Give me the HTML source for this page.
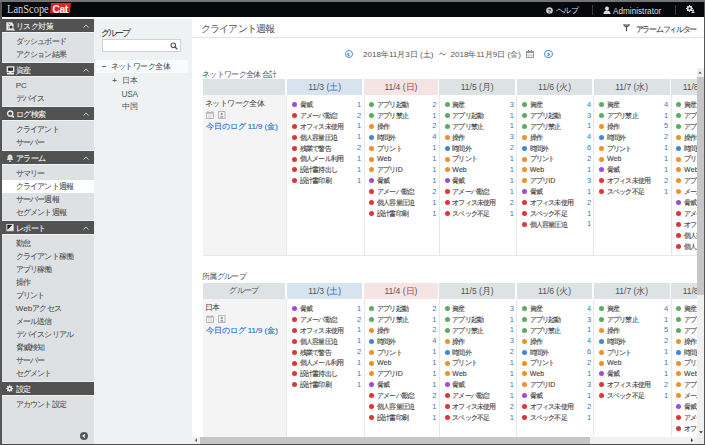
<!DOCTYPE html>
<html><head><meta charset="utf-8"><style>
*{margin:0;padding:0;box-sizing:border-box}
html,body{width:705px;height:445px;overflow:hidden}
body{background:#555;font-family:"Liberation Sans",sans-serif;position:relative;color:#555}
div,span{position:absolute;white-space:nowrap}
.topbar{left:2px;top:2px;width:701.8px;height:14.5px;background:#07080c}
.white{left:2px;top:16.5px;width:701.8px;height:427px;background:#fff}
.bottom{left:0;top:443.5px;width:705px;height:1.5px;background:#4c4c4c}
.side{left:2px;top:19px;width:92px;height:424.5px;background:#dde1e4}
.grp{left:94px;top:19px;width:98px;height:424.5px;background:#eef2f3}
.sh{left:2px;width:92px;height:13.9px;background:#525252;border-bottom:1px solid #f3f3f3;box-shadow:0 -1px 0 #f0f0f0}
.sh .si{left:4px;top:3px;width:9px;height:9px}
.sh .si svg{display:block}
.sh .st{left:14px;top:0.7px;line-height:13.9px;font-size:8px;color:#eee;letter-spacing:-0.6px;-webkit-text-stroke:0.1px #eee}
.chev{position:absolute;left:81.3px;top:4.5px}
.sit{left:2px;width:92px;height:13px;line-height:13px;padding-left:13.7px;font-size:8px;color:#4a4a4a;-webkit-text-stroke:0.05px #4a4a4a;letter-spacing:-0.8px}
.sit.sel{background:#fff}
.lat{position:static;letter-spacing:0.1px}
.logo{left:7.2px;top:1.5px;font-family:"Liberation Serif",serif;font-size:12px;color:#d6d6d6;line-height:14px;transform:scaleX(0.87);transform-origin:0 0}
.cat{left:50px;top:3.1px;width:21px;height:10.3px;background:#dc2626;clip-path:polygon(4.5% 0,100% 0,94% 100%,0 100%);color:#fff;font-weight:bold;font-size:10.2px;line-height:13px;padding-left:2.5px;letter-spacing:-0.4px}
.tb{top:3.5px;line-height:15px;font-size:8.2px;color:#ddd}
.sep{top:5px;width:1px;height:10px;background:#3a3a3a}
.title{left:201.2px;top:22.5px;font-size:9.5px;line-height:11px;color:#555;letter-spacing:-0.9px}
.hline{left:192px;top:36.5px;width:511.8px;height:1px;background:#e3e3e3}
.filt{left:635.8px;top:23.5px;font-size:8.4px;line-height:10px;color:#444;letter-spacing:-1.3px;-webkit-text-stroke:0.1px #444}
.date{top:49px;font-size:8.05px;line-height:11px;color:#555}
.circ{width:8.5px;height:8.5px;border:1.2px solid #4a8ee0;border-radius:50%}
.lbl{left:202px;font-size:8px;line-height:10px;color:#555;letter-spacing:-0.7px}
.th0{left:203px;width:82px;height:16px;background:#dde2e5;text-align:center;line-height:16px;font-size:8px;color:#555;letter-spacing:-0.6px}
.th{height:16px;text-align:center;line-height:16px;font-size:8.5px;color:#555;background:#dde2e5}
.th.sat{background:#d7e4f0}
.th.sun{background:#f6e3e3}
.blue{position:static;color:#3a78c8}
.red{position:static;color:#d03040}
.rh{left:203px;width:83.5px;background:#f4f4f4;border-bottom:1px solid #e6e6e6}
.rn{left:2px;top:3.5px;font-size:8px;line-height:10px;color:#444;letter-spacing:-0.6px}
.ic{position:absolute;left:3px;top:16px}
.ic i{position:absolute;top:0;width:7px;height:7px;border:1px solid #aaa}
.ic i.i1{left:0} .ic i.i2{left:12px}
.lnk{left:2.5px;top:27px;font-size:7.85px;line-height:10px;color:#2f74cc;-webkit-text-stroke:0.15px #2f74cc}
.td{background:#fff;border-left:1px solid #e8e8e8;padding-top:3.7px}
.it{position:relative;height:10.9px;line-height:10.9px;font-size:7px}
.it b{position:absolute;left:4.9px;top:3.4px;width:5px;height:5px;border-radius:50%}
.it .nm{left:12.5px;top:1.3px;color:#444;-webkit-text-stroke:0.12px #444;letter-spacing:-0.8px}
.it .nu{right:2.3px;top:1px;color:#3a78c8;font-size:7.5px}
.vs{left:697px;top:68px;width:6.8px;height:369px;background:#f0f0f0}
.vthumb{left:697px;top:77px;width:6.8px;height:218px;background:#c6c6c6}
.hs{left:192px;top:437px;width:505px;height:6.5px;background:#f0f0f0}
.hthumb{left:200px;top:437px;width:390px;height:6.5px;background:#c6c6c6}
.corner{left:697px;top:437px;width:6.8px;height:6.5px;background:#ececec}
</style></head><body>
<div style="left:0;top:0;width:705px;height:2px;background:#747474"></div>
<div class="topbar"></div>
<div class="white"></div>
<div class="side"></div>
<div class="grp"></div>
<div class="bottom"></div>
<div class="logo">LanScope</div>
<div class="cat">Cat</div>
<div class="tb" style="left:545.5px"><svg width="7" height="7" viewBox="0 0 7 7" style="margin-top:3px;display:block"><circle cx="3.5" cy="3.5" r="3.3" fill="#ccc"/><text x="3.5" y="5.6" font-size="5.5" font-family="Liberation Sans" font-weight="bold" text-anchor="middle" fill="#222">?</text></svg></div>
<div class="tb" style="left:556px;top:2.5px;letter-spacing:-0.6px">ヘルプ</div>
<div class="sep" style="left:592px"></div>
<div class="tb" style="left:603px"><svg width="8" height="8" viewBox="0 0 8 8" style="margin-top:2px;display:block"><circle cx="4" cy="2.5" r="2" fill="#ddd"/><path d="M0.5 8c0-2.5 1.5-3.5 3.5-3.5s3.5 1 3.5 3.5z" fill="#ddd"/></svg></div>
<div class="tb" style="left:613px">Administrator</div>
<div class="sep" style="left:675px"></div>
<div class="tb" style="left:686px"><svg width="9" height="8" viewBox="0 0 9 8" style="margin-top:1.5px;display:block"><circle cx="3.5" cy="3.5" r="2.2" fill="none" stroke="#ddd" stroke-width="1.2"/><path d="M3.5 0v7M0 3.5h7M1 1l5 5M6 1l-5 5" stroke="#ddd" stroke-width="0.9"/><circle cx="3.5" cy="3.5" r="1" fill="#07080c"/><circle cx="7" cy="5.5" r="1.1" fill="#ddd"/><path d="M5.3 8c0-1 .7-1.6 1.7-1.6s1.7.6 1.7 1.6z" fill="#ddd"/></svg></div>
<div class="sh" style="top:19px"><span class="si"><svg width="9" height="9" viewBox="0 0 9 9"><path d="M0.3 0.3h5.5l1.7 1.7v2H0.3z M0.3 4h2v4.5H0.3z M0.3 6.8h7.5v1.7H0.3z" fill="#e8e8e8"/><circle cx="5" cy="5" r="2.6" fill="#e8e8e8"/><circle cx="5" cy="5" r="1.5" fill="#333"/><path d="M2.5 1.6L3.8 2.8" stroke="#444" stroke-width="0.9"/><path d="M6.8 6.8L8.5 8.5" stroke="#e8e8e8" stroke-width="1.2"/></svg></span><span class="st">リスク対策</span><svg class="chev" width="6" height="4" viewBox="0 0 6 4"><path d="M0.5 3.5L3 1L5.5 3.5" stroke="#ccc" stroke-width="1" fill="none"/></svg></div>
<div class="sit" style="top:35px">ダッシュボード</div>
<div class="sit" style="top:48px">アクション結果</div>
<div class="sh" style="top:63px"><span class="si"><svg width="9" height="9" viewBox="0 0 9 9"><rect x="1.3" y="0.9" width="6.4" height="4.6" stroke="#eee" stroke-width="1.3" fill="#333"/><path d="M3.5 5.5h2v1.2h-2z M1 6.7h7v1.7H1z" fill="#eee"/></svg></span><span class="st">資産</span><svg class="chev" width="6" height="4" viewBox="0 0 6 4"><path d="M0.5 3.5L3 1L5.5 3.5" stroke="#ccc" stroke-width="1" fill="none"/></svg></div>
<div class="sit" style="top:79px"><span class="lat">PC</span></div>
<div class="sit" style="top:92px">デバイス</div>
<div class="sh" style="top:107px"><span class="si"><svg width="9" height="9" viewBox="0 0 9 9"><circle cx="4.2" cy="3.6" r="2.6" stroke="#eee" stroke-width="1.3" fill="none"/><path d="M6 5.6l1.8 1.8" stroke="#eee" stroke-width="1.6"/></svg></span><span class="st">ログ検索</span><svg class="chev" width="6" height="4" viewBox="0 0 6 4"><path d="M0.5 3.5L3 1L5.5 3.5" stroke="#ccc" stroke-width="1" fill="none"/></svg></div>
<div class="sit" style="top:123px">クライアント</div>
<div class="sit" style="top:136px">サーバー</div>
<div class="sh" style="top:151px"><span class="si"><svg width="8" height="8" viewBox="0 0 8 8"><path d="M4 0.5c-1.8 0-2.5 1.5-2.5 3v1.5l-1 1h7l-1-1v-1.5c0-1.5-.7-3-2.5-3z" fill="#ddd"/><circle cx="4" cy="7.2" r="0.9" fill="#ddd"/></svg></span><span class="st">アラーム</span><svg class="chev" width="6" height="4" viewBox="0 0 6 4"><path d="M0.5 3.5L3 1L5.5 3.5" stroke="#ccc" stroke-width="1" fill="none"/></svg></div>
<div class="sit" style="top:167px">サマリー</div>
<div class="sit sel" style="top:180px">クライアント週報</div>
<div class="sit" style="top:193px">サーバー週報</div>
<div class="sit" style="top:206px">セグメント週報</div>
<div class="sh" style="top:221px"><span class="si"><svg width="9" height="9" viewBox="0 0.6 9 9"><rect x="0.4" y="0.4" width="7.2" height="7.4" fill="#eee"/><path d="M1.3 1.3h5.2L1.3 6.5z" fill="#222"/><path d="M1.5 6.8h5" stroke="#bbb" stroke-width="0.6"/></svg></span><span class="st">レポート</span><svg class="chev" width="6" height="4" viewBox="0 0 6 4"><path d="M0.5 3.5L3 1L5.5 3.5" stroke="#ccc" stroke-width="1" fill="none"/></svg></div>
<div class="sit" style="top:237px">勤怠</div>
<div class="sit" style="top:250px">クライアント稼働</div>
<div class="sit" style="top:263px">アプリ稼働</div>
<div class="sit" style="top:276px">操作</div>
<div class="sit" style="top:289px">プリント</div>
<div class="sit" style="top:302px"><span class="lat">Web</span>アクセス</div>
<div class="sit" style="top:315px">メール送信</div>
<div class="sit" style="top:328px">デバイスシリアル</div>
<div class="sit" style="top:341px">脅威検知</div>
<div class="sit" style="top:354px">サーバー</div>
<div class="sit" style="top:367px">セグメント</div>
<div class="sh" style="top:382px"><span class="si"><svg width="9" height="9" viewBox="0.8 0.9 9 9" style="overflow:visible"><polygon points="4.50,0.50 5.38,2.38 7.33,1.67 6.62,3.62 8.50,4.50 6.62,5.38 7.33,7.33 5.38,6.62 4.50,8.50 3.62,6.62 1.67,7.33 2.38,5.38 0.50,4.50 2.38,3.62 1.67,1.67 3.62,2.38" fill="#f0f0f0"/><circle cx="4.5" cy="4.5" r="0.9" fill="#333"/></svg></span><span class="st">設定</span></div>
<div class="sit" style="top:398px">アカウント設定</div>
<div style="left:79.5px;top:432px;width:8px;height:8px;border-radius:50%;background:#555"></div>
<svg style="position:absolute;left:81.5px;top:434px" width="4" height="4" viewBox="0 0 4 4"><path d="M3 0.5L1 2L3 3.5" stroke="#fff" stroke-width="1.1" fill="none"/></svg>
<div style="left:100.8px;top:28px;font-size:8.8px;line-height:10px;color:#444;letter-spacing:-1.85px;-webkit-text-stroke:0.1px #444">グループ</div>
<div style="left:102px;top:39px;width:78.7px;height:13px;background:#fff;border:1px solid #cfd3d5"></div>
<svg style="position:absolute;left:170px;top:42px" width="8" height="8" viewBox="0 0 8 8"><circle cx="3.3" cy="3.3" r="2.3" stroke="#555" stroke-width="1.2" fill="none"/><path d="M5 5l2.3 2.3" stroke="#555" stroke-width="1.4"/></svg>
<div style="left:96px;top:60px;width:92px;height:13px;background:#f8fbfc"></div>
<div style="left:101.5px;top:65.5px;width:4.5px;height:1.2px;background:#666"></div>
<div style="left:110.5px;top:61px;font-size:8.3px;line-height:10px;color:#444;letter-spacing:-0.55px">ネットワーク全体</div>
<div style="left:112.3px;top:76px;font-size:8px;line-height:10px;color:#666;font-weight:bold">+</div>
<div style="left:121.5px;top:75px;font-size:8.3px;line-height:10px;color:#555">日本</div>
<div style="left:121.5px;top:88.5px;font-size:8.3px;line-height:10px;color:#555;letter-spacing:-0.25px">USA</div>
<div style="left:121.5px;top:101px;font-size:8.3px;line-height:10px;color:#555">中国</div>
<div class="title">クライアント週報</div>
<div class="hline"></div>
<svg style="position:absolute;left:623px;top:24px" width="7" height="8" viewBox="0 0 7 8"><path d="M0.3 0.2h6.4v1.3L4.1 3.6V7.5L2.9 7.1V3.6L0.3 1.5z" fill="#555"/><path d="M1.8 1.0h3.4" stroke="#fff" stroke-width="0.6"/></svg>
<div class="filt">アラームフィルター</div>
<div class="circ" style="left:344.5px;top:49.5px"></div>
<svg style="position:absolute;left:346.3px;top:51.5px" width="5" height="5" viewBox="0 0 5 5"><path d="M3.3 0.9L1.7 2.5L3.3 4.1" stroke="#4a8ee0" stroke-width="1.3" fill="none"/></svg>
<div class="date" style="left:363px">2018年11月3日 (土)</div>
<svg style="position:absolute;left:438.5px;top:52px" width="7" height="4" viewBox="0 0 7 4"><path d="M0.3 2.6C1.5 0.6 2.5 0.8 3.5 2 S5.5 3.4 6.7 1.4" stroke="#555" stroke-width="0.9" fill="none"/></svg>
<div class="date" style="left:450.5px">2018年11月9日 (金)</div>
<svg style="position:absolute;left:526px;top:50px" width="8" height="8" viewBox="0 0 8 8"><rect x="0.5" y="1.5" width="7" height="6" fill="none" stroke="#999"/><path d="M0.5 2.5h7" stroke="#999"/><path d="M2.7 3.5v3.5M5.3 3.5v3.5M1 5.2h6" stroke="#c4c4c4" stroke-width="0.8"/><path d="M2.5 0v2M5.5 0v2" stroke="#888"/></svg>
<div class="circ" style="left:544px;top:49.5px"></div>
<svg style="position:absolute;left:545.8px;top:51.5px" width="5" height="5" viewBox="0 0 5 5"><path d="M1.7 0.9L3.3 2.5L1.7 4.1" stroke="#4a8ee0" stroke-width="1.3" fill="none"/></svg>
<div style="left:192px;top:68px;width:505px;height:369px;overflow:hidden"><div style="left:-192px;top:-68px;width:705px;height:445px">
<div class="lbl" style="top:69.5px">ネットワーク全体 合計</div>
<div class="th0" style="top:79px"></div>
<div class="rh" style="top:95px;height:161px"><div class="rn">ネットワーク全体</div><svg class="ic" width="20" height="8" viewBox="0 0 20 8"><path d="M0.5 1.5h7v6h-7z" stroke="#b8b8b8" stroke-width="1" fill="none"/><path d="M0.5 2.5h7" stroke="#c8c8c8"/><path d="M3 3.5v3.5M5 3.5v3.5" stroke="#d0d0d0" stroke-width="0.9"/><path d="M2 0v2M6 0v2" stroke="#b0b0b0"/><rect x="12.5" y="0.5" width="6.5" height="7" stroke="#b8b8b8" fill="none"/><circle cx="15.75" cy="2.9" r="1.1" fill="#9a9a9a"/><path d="M14.2 6.8c0-1.4 .7-2.2 1.55-2.2s1.55 .8 1.55 2.2z" fill="#a8a8a8"/></svg><div class="lnk">今日のログ 11/9 (金)</div></div>
<div class="th sat" style="left:286.8px;top:79px;width:75.7px">11/3 (<span class="blue">土</span>)</div>
<div class="td" style="left:286.3px;top:95px;width:77.2px;height:161px"><div class="it"><b style="background:#9a4ce0"></b><span class="nm">脅威</span><span class="nu">1</span></div><div class="it"><b style="background:#e03535"></b><span class="nm">アメーバ勤怠</span><span class="nu">2</span></div><div class="it"><b style="background:#e03535"></b><span class="nm">オフィス未使用</span><span class="nu">1</span></div><div class="it"><b style="background:#e03535"></b><span class="nm">個人容量圧迫</span><span class="nu">1</span></div><div class="it"><b style="background:#e03535"></b><span class="nm">残業で警告</span><span class="nu">2</span></div><div class="it"><b style="background:#e03535"></b><span class="nm">個人メール利用</span><span class="nu">1</span></div><div class="it"><b style="background:#e03535"></b><span class="nm">設計書持出し</span><span class="nu">1</span></div><div class="it"><b style="background:#e03535"></b><span class="nm">設計書印刷</span><span class="nu">1</span></div></div>
<div class="th sun" style="left:364.0px;top:79px;width:73.8px">11/4 (<span class="red">日</span>)</div>
<div class="td" style="left:363.5px;top:95px;width:75.3px;height:161px"><div class="it"><b style="background:#5cab62"></b><span class="nm">アプリ起動</span><span class="nu">2</span></div><div class="it"><b style="background:#5cab62"></b><span class="nm">アプリ禁止</span><span class="nu">1</span></div><div class="it"><b style="background:#f0902a"></b><span class="nm">操作</span><span class="nu">2</span></div><div class="it"><b style="background:#3f86e0"></b><span class="nm">時間外</span><span class="nu">4</span></div><div class="it"><b style="background:#f0902a"></b><span class="nm">プリント</span><span class="nu">1</span></div><div class="it"><b style="background:#f0902a"></b><span class="nm"><span class="lat">Web</span></span><span class="nu">1</span></div><div class="it"><b style="background:#f0902a"></b><span class="nm">アプリ<span class="lat">ID</span></span><span class="nu">1</span></div><div class="it"><b style="background:#9a4ce0"></b><span class="nm">脅威</span><span class="nu">1</span></div><div class="it"><b style="background:#e03535"></b><span class="nm">アメーバ勤怠</span><span class="nu">2</span></div><div class="it"><b style="background:#e03535"></b><span class="nm">個人容量圧迫</span><span class="nu">1</span></div><div class="it"><b style="background:#e03535"></b><span class="nm">設計書印刷</span><span class="nu">1</span></div></div>
<div class="th wk" style="left:439.3px;top:79px;width:75.9px">11/5 (月)</div>
<div class="td" style="left:438.8px;top:95px;width:77.4px;height:161px"><div class="it"><b style="background:#5cab62"></b><span class="nm">資産</span><span class="nu">3</span></div><div class="it"><b style="background:#5cab62"></b><span class="nm">アプリ起動</span><span class="nu">1</span></div><div class="it"><b style="background:#5cab62"></b><span class="nm">アプリ禁止</span><span class="nu">1</span></div><div class="it"><b style="background:#f0902a"></b><span class="nm">操作</span><span class="nu">3</span></div><div class="it"><b style="background:#3f86e0"></b><span class="nm">時間外</span><span class="nu">2</span></div><div class="it"><b style="background:#f0902a"></b><span class="nm">プリント</span><span class="nu">1</span></div><div class="it"><b style="background:#f0902a"></b><span class="nm"><span class="lat">Web</span></span><span class="nu">1</span></div><div class="it"><b style="background:#9a4ce0"></b><span class="nm">脅威</span><span class="nu">1</span></div><div class="it"><b style="background:#e03535"></b><span class="nm">アメーバ勤怠</span><span class="nu">1</span></div><div class="it"><b style="background:#e03535"></b><span class="nm">オフィス未使用</span><span class="nu">2</span></div><div class="it"><b style="background:#e03535"></b><span class="nm">スペック不足</span><span class="nu">1</span></div></div>
<div class="th wk" style="left:516.7px;top:79px;width:75.7px">11/6 (火)</div>
<div class="td" style="left:516.2px;top:95px;width:77.2px;height:161px"><div class="it"><b style="background:#5cab62"></b><span class="nm">資産</span><span class="nu">4</span></div><div class="it"><b style="background:#5cab62"></b><span class="nm">アプリ起動</span><span class="nu">3</span></div><div class="it"><b style="background:#5cab62"></b><span class="nm">アプリ禁止</span><span class="nu">1</span></div><div class="it"><b style="background:#f0902a"></b><span class="nm">操作</span><span class="nu">4</span></div><div class="it"><b style="background:#3f86e0"></b><span class="nm">時間外</span><span class="nu">6</span></div><div class="it"><b style="background:#f0902a"></b><span class="nm">プリント</span><span class="nu">2</span></div><div class="it"><b style="background:#f0902a"></b><span class="nm"><span class="lat">Web</span></span><span class="nu">1</span></div><div class="it"><b style="background:#f0902a"></b><span class="nm">アプリ<span class="lat">ID</span></span><span class="nu">3</span></div><div class="it"><b style="background:#9a4ce0"></b><span class="nm">脅威</span><span class="nu">1</span></div><div class="it"><b style="background:#e03535"></b><span class="nm">オフィス未使用</span><span class="nu">2</span></div><div class="it"><b style="background:#e03535"></b><span class="nm">スペック不足</span><span class="nu">1</span></div><div class="it"><b style="background:#e03535"></b><span class="nm">個人容量圧迫</span><span class="nu">1</span></div></div>
<div class="th wk" style="left:593.9px;top:79px;width:75.7px">11/7 (水)</div>
<div class="td" style="left:593.4px;top:95px;width:77.2px;height:161px"><div class="it"><b style="background:#5cab62"></b><span class="nm">資産</span><span class="nu">4</span></div><div class="it"><b style="background:#5cab62"></b><span class="nm">アプリ禁止</span><span class="nu">1</span></div><div class="it"><b style="background:#f0902a"></b><span class="nm">操作</span><span class="nu">5</span></div><div class="it"><b style="background:#3f86e0"></b><span class="nm">時間外</span><span class="nu">2</span></div><div class="it"><b style="background:#f0902a"></b><span class="nm">プリント</span><span class="nu">1</span></div><div class="it"><b style="background:#f0902a"></b><span class="nm"><span class="lat">Web</span></span><span class="nu">1</span></div><div class="it"><b style="background:#9a4ce0"></b><span class="nm">脅威</span><span class="nu">1</span></div><div class="it"><b style="background:#e03535"></b><span class="nm">オフィス未使用</span><span class="nu">2</span></div><div class="it"><b style="background:#e03535"></b><span class="nm">スペック不足</span><span class="nu">1</span></div></div>
<div class="th wk" style="left:671.1px;top:79px;width:56.0px">11/8 (木)</div>
<div class="td" style="left:670.6px;top:95px;width:77.2px;height:161px"><div class="it"><b style="background:#5cab62"></b><span class="nm">資産</span><span class="nu">4</span></div><div class="it"><b style="background:#5cab62"></b><span class="nm">アプリ起動</span><span class="nu">3</span></div><div class="it"><b style="background:#5cab62"></b><span class="nm">アプリ禁止</span><span class="nu">1</span></div><div class="it"><b style="background:#f0902a"></b><span class="nm">操作</span><span class="nu">4</span></div><div class="it"><b style="background:#3f86e0"></b><span class="nm">時間外</span><span class="nu">6</span></div><div class="it"><b style="background:#f0902a"></b><span class="nm">プリント</span><span class="nu">2</span></div><div class="it"><b style="background:#f0902a"></b><span class="nm"><span class="lat">Web</span></span><span class="nu">1</span></div><div class="it"><b style="background:#f0902a"></b><span class="nm">アプリ<span class="lat">ID</span></span><span class="nu">3</span></div><div class="it"><b style="background:#f0902a"></b><span class="nm">メール送信</span><span class="nu">1</span></div><div class="it"><b style="background:#9a4ce0"></b><span class="nm">脅威</span><span class="nu">1</span></div><div class="it"><b style="background:#e03535"></b><span class="nm">アメーバ勤怠</span><span class="nu">1</span></div><div class="it"><b style="background:#e03535"></b><span class="nm">オフィス未使用</span><span class="nu">2</span></div><div class="it"><b style="background:#e03535"></b><span class="nm">個人容量圧迫</span><span class="nu">1</span></div><div class="it"><b style="background:#e03535"></b><span class="nm">個人メール利用</span><span class="nu">1</span></div></div>
<div style="left:203px;top:255px;width:560px;height:1px;background:#e8e8e8"></div>
<div class="lbl" style="top:271.5px">所属グループ</div>
<div class="th0" style="top:283px">グループ</div>
<div class="rh" style="top:299px;height:161px"><div class="rn">日本</div><svg class="ic" width="20" height="8" viewBox="0 0 20 8"><path d="M0.5 1.5h7v6h-7z" stroke="#b8b8b8" stroke-width="1" fill="none"/><path d="M0.5 2.5h7" stroke="#c8c8c8"/><path d="M3 3.5v3.5M5 3.5v3.5" stroke="#d0d0d0" stroke-width="0.9"/><path d="M2 0v2M6 0v2" stroke="#b0b0b0"/><rect x="12.5" y="0.5" width="6.5" height="7" stroke="#b8b8b8" fill="none"/><circle cx="15.75" cy="2.9" r="1.1" fill="#9a9a9a"/><path d="M14.2 6.8c0-1.4 .7-2.2 1.55-2.2s1.55 .8 1.55 2.2z" fill="#a8a8a8"/></svg><div class="lnk">今日のログ 11/9 (金)</div></div>
<div class="th sat" style="left:286.8px;top:283px;width:75.7px">11/3 (<span class="blue">土</span>)</div>
<div class="td" style="left:286.3px;top:299px;width:77.2px;height:161px"><div class="it"><b style="background:#9a4ce0"></b><span class="nm">脅威</span><span class="nu">1</span></div><div class="it"><b style="background:#e03535"></b><span class="nm">アメーバ勤怠</span><span class="nu">2</span></div><div class="it"><b style="background:#e03535"></b><span class="nm">オフィス未使用</span><span class="nu">1</span></div><div class="it"><b style="background:#e03535"></b><span class="nm">個人容量圧迫</span><span class="nu">1</span></div><div class="it"><b style="background:#e03535"></b><span class="nm">残業で警告</span><span class="nu">2</span></div><div class="it"><b style="background:#e03535"></b><span class="nm">個人メール利用</span><span class="nu">1</span></div><div class="it"><b style="background:#e03535"></b><span class="nm">設計書持出し</span><span class="nu">1</span></div><div class="it"><b style="background:#e03535"></b><span class="nm">設計書印刷</span><span class="nu">1</span></div></div>
<div class="th sun" style="left:364.0px;top:283px;width:73.8px">11/4 (<span class="red">日</span>)</div>
<div class="td" style="left:363.5px;top:299px;width:75.3px;height:161px"><div class="it"><b style="background:#5cab62"></b><span class="nm">アプリ起動</span><span class="nu">2</span></div><div class="it"><b style="background:#5cab62"></b><span class="nm">アプリ禁止</span><span class="nu">1</span></div><div class="it"><b style="background:#f0902a"></b><span class="nm">操作</span><span class="nu">2</span></div><div class="it"><b style="background:#3f86e0"></b><span class="nm">時間外</span><span class="nu">4</span></div><div class="it"><b style="background:#f0902a"></b><span class="nm">プリント</span><span class="nu">1</span></div><div class="it"><b style="background:#f0902a"></b><span class="nm"><span class="lat">Web</span></span><span class="nu">1</span></div><div class="it"><b style="background:#f0902a"></b><span class="nm">アプリ<span class="lat">ID</span></span><span class="nu">1</span></div><div class="it"><b style="background:#9a4ce0"></b><span class="nm">脅威</span><span class="nu">1</span></div><div class="it"><b style="background:#e03535"></b><span class="nm">アメーバ勤怠</span><span class="nu">2</span></div><div class="it"><b style="background:#e03535"></b><span class="nm">個人容量圧迫</span><span class="nu">1</span></div><div class="it"><b style="background:#e03535"></b><span class="nm">設計書印刷</span><span class="nu">1</span></div></div>
<div class="th wk" style="left:439.3px;top:283px;width:75.9px">11/5 (月)</div>
<div class="td" style="left:438.8px;top:299px;width:77.4px;height:161px"><div class="it"><b style="background:#5cab62"></b><span class="nm">資産</span><span class="nu">3</span></div><div class="it"><b style="background:#5cab62"></b><span class="nm">アプリ起動</span><span class="nu">1</span></div><div class="it"><b style="background:#5cab62"></b><span class="nm">アプリ禁止</span><span class="nu">1</span></div><div class="it"><b style="background:#f0902a"></b><span class="nm">操作</span><span class="nu">3</span></div><div class="it"><b style="background:#3f86e0"></b><span class="nm">時間外</span><span class="nu">2</span></div><div class="it"><b style="background:#f0902a"></b><span class="nm">プリント</span><span class="nu">1</span></div><div class="it"><b style="background:#f0902a"></b><span class="nm"><span class="lat">Web</span></span><span class="nu">1</span></div><div class="it"><b style="background:#9a4ce0"></b><span class="nm">脅威</span><span class="nu">1</span></div><div class="it"><b style="background:#e03535"></b><span class="nm">アメーバ勤怠</span><span class="nu">1</span></div><div class="it"><b style="background:#e03535"></b><span class="nm">オフィス未使用</span><span class="nu">2</span></div><div class="it"><b style="background:#e03535"></b><span class="nm">スペック不足</span><span class="nu">1</span></div></div>
<div class="th wk" style="left:516.7px;top:283px;width:75.7px">11/6 (火)</div>
<div class="td" style="left:516.2px;top:299px;width:77.2px;height:161px"><div class="it"><b style="background:#5cab62"></b><span class="nm">資産</span><span class="nu">4</span></div><div class="it"><b style="background:#5cab62"></b><span class="nm">アプリ起動</span><span class="nu">3</span></div><div class="it"><b style="background:#5cab62"></b><span class="nm">アプリ禁止</span><span class="nu">1</span></div><div class="it"><b style="background:#f0902a"></b><span class="nm">操作</span><span class="nu">4</span></div><div class="it"><b style="background:#3f86e0"></b><span class="nm">時間外</span><span class="nu">6</span></div><div class="it"><b style="background:#f0902a"></b><span class="nm">プリント</span><span class="nu">2</span></div><div class="it"><b style="background:#f0902a"></b><span class="nm"><span class="lat">Web</span></span><span class="nu">1</span></div><div class="it"><b style="background:#f0902a"></b><span class="nm">アプリ<span class="lat">ID</span></span><span class="nu">3</span></div><div class="it"><b style="background:#9a4ce0"></b><span class="nm">脅威</span><span class="nu">1</span></div><div class="it"><b style="background:#e03535"></b><span class="nm">オフィス未使用</span><span class="nu">2</span></div><div class="it"><b style="background:#e03535"></b><span class="nm">スペック不足</span><span class="nu">1</span></div></div>
<div class="th wk" style="left:593.9px;top:283px;width:75.7px">11/7 (水)</div>
<div class="td" style="left:593.4px;top:299px;width:77.2px;height:161px"><div class="it"><b style="background:#5cab62"></b><span class="nm">資産</span><span class="nu">4</span></div><div class="it"><b style="background:#5cab62"></b><span class="nm">アプリ禁止</span><span class="nu">1</span></div><div class="it"><b style="background:#f0902a"></b><span class="nm">操作</span><span class="nu">5</span></div><div class="it"><b style="background:#3f86e0"></b><span class="nm">時間外</span><span class="nu">2</span></div><div class="it"><b style="background:#f0902a"></b><span class="nm">プリント</span><span class="nu">1</span></div><div class="it"><b style="background:#f0902a"></b><span class="nm"><span class="lat">Web</span></span><span class="nu">1</span></div><div class="it"><b style="background:#9a4ce0"></b><span class="nm">脅威</span><span class="nu">1</span></div><div class="it"><b style="background:#e03535"></b><span class="nm">オフィス未使用</span><span class="nu">2</span></div><div class="it"><b style="background:#e03535"></b><span class="nm">スペック不足</span><span class="nu">1</span></div></div>
<div class="th wk" style="left:671.1px;top:283px;width:56.0px">11/8 (木)</div>
<div class="td" style="left:670.6px;top:299px;width:77.2px;height:161px"><div class="it"><b style="background:#5cab62"></b><span class="nm">資産</span><span class="nu">4</span></div><div class="it"><b style="background:#5cab62"></b><span class="nm">アプリ起動</span><span class="nu">3</span></div><div class="it"><b style="background:#5cab62"></b><span class="nm">アプリ禁止</span><span class="nu">1</span></div><div class="it"><b style="background:#f0902a"></b><span class="nm">操作</span><span class="nu">4</span></div><div class="it"><b style="background:#3f86e0"></b><span class="nm">時間外</span><span class="nu">6</span></div><div class="it"><b style="background:#f0902a"></b><span class="nm">プリント</span><span class="nu">2</span></div><div class="it"><b style="background:#f0902a"></b><span class="nm"><span class="lat">Web</span></span><span class="nu">1</span></div><div class="it"><b style="background:#f0902a"></b><span class="nm">アプリ<span class="lat">ID</span></span><span class="nu">3</span></div><div class="it"><b style="background:#f0902a"></b><span class="nm">メール送信</span><span class="nu">1</span></div><div class="it"><b style="background:#9a4ce0"></b><span class="nm">脅威</span><span class="nu">1</span></div><div class="it"><b style="background:#e03535"></b><span class="nm">アメーバ勤怠</span><span class="nu">1</span></div><div class="it"><b style="background:#e03535"></b><span class="nm">オフィス未使用</span><span class="nu">2</span></div></div>
<div style="left:203px;top:459px;width:560px;height:1px;background:#e8e8e8"></div>
</div></div>
<div class="vs"></div>
<div class="vthumb"></div>
<div class="hs"></div>
<div class="hthumb"></div>
<div class="corner"></div>
<svg style="position:absolute;left:697px;top:68px" width="6" height="9" viewBox="0 0 6 9"><path d="M1.2 5.5L3 3.5L4.8 5.5z" fill="#555"/></svg>
<svg style="position:absolute;left:697.5px;top:427.5px" width="6" height="9" viewBox="0 0 6 9"><path d="M1 3.3L3 5.3L5 3.3z" fill="#333"/></svg>
<svg style="position:absolute;left:192px;top:437px" width="8" height="6.5" viewBox="0 0 8 6.5"><path d="M5 1.3L3 3.25L5 5.2z" fill="#555"/></svg>
<svg style="position:absolute;left:688px;top:437px" width="8" height="6.5" viewBox="0 0 8 6.5"><path d="M3 1.3L5 3.25L3 5.2z" fill="#333"/></svg>
</body></html>
